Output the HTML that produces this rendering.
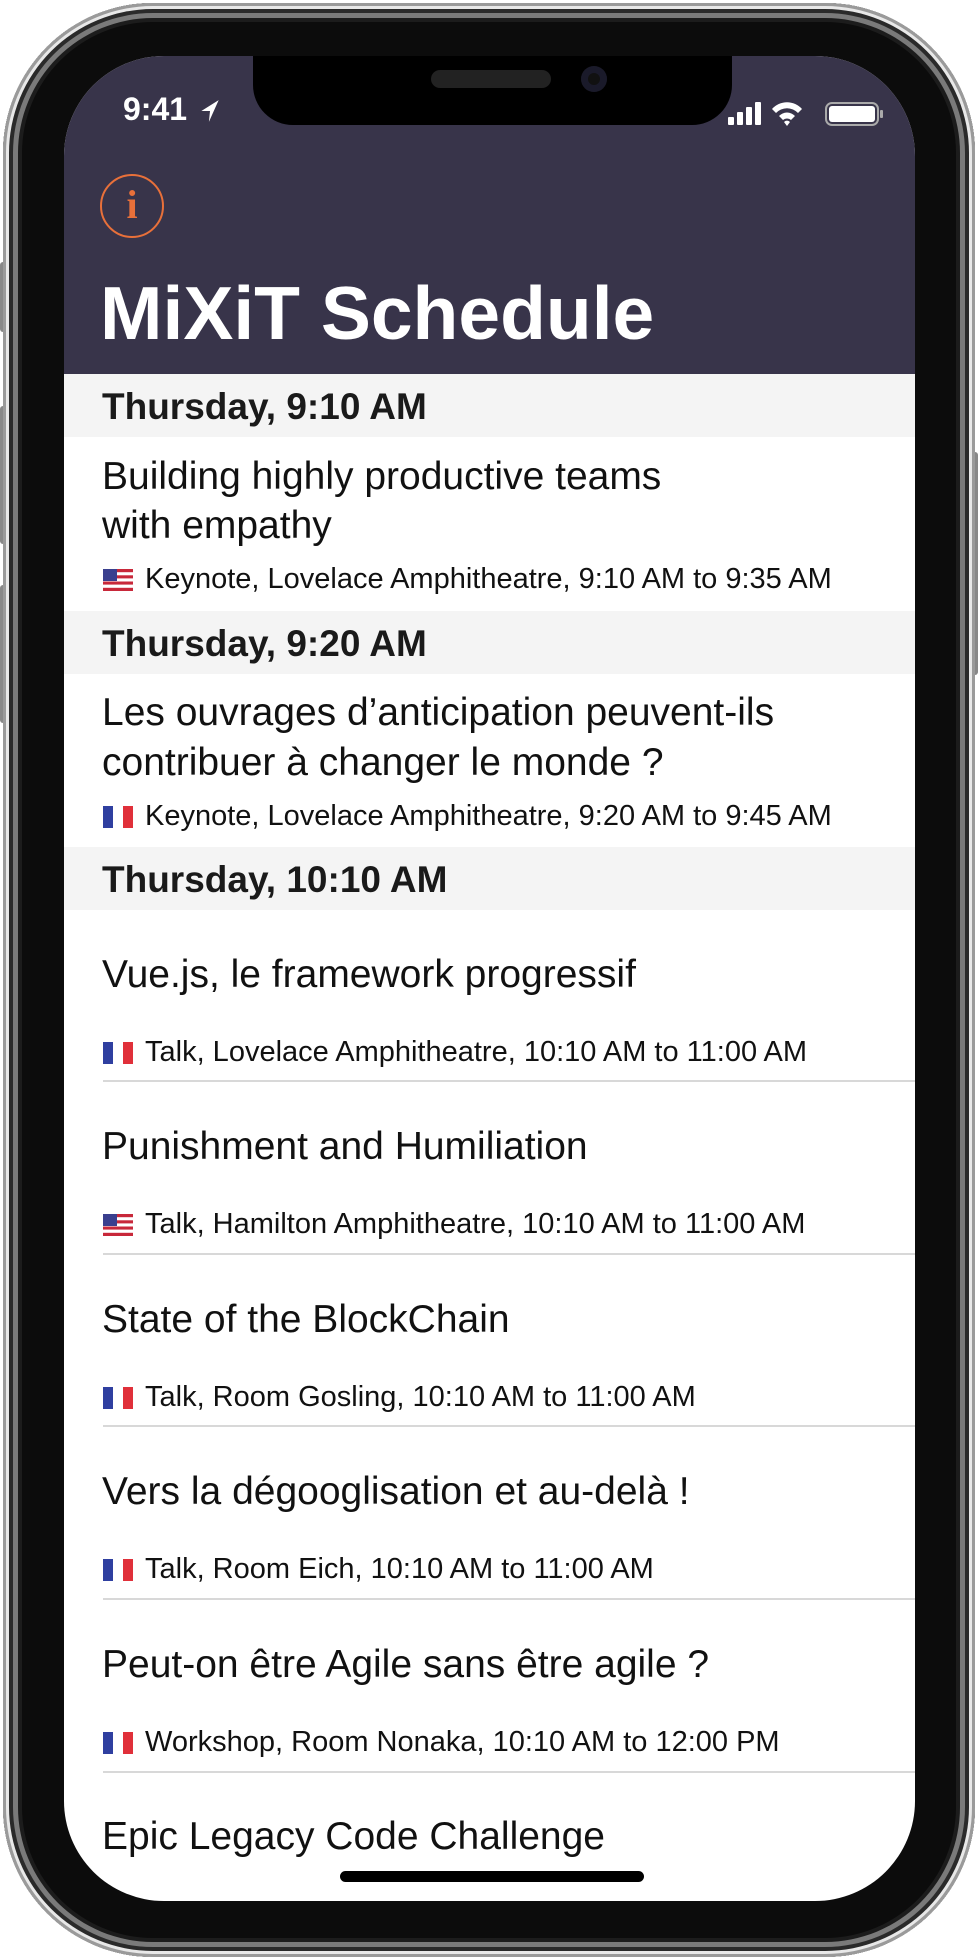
<!DOCTYPE html>
<html><head><meta charset="utf-8"><style>
*{margin:0;padding:0;box-sizing:border-box}
html,body{width:978px;height:1960px;background:#fff;overflow:hidden;font-family:"Liberation Sans",sans-serif}
.abs{position:absolute}
#phone{left:3px;top:3px;width:972px;height:1954px;border-radius:150px;background:#0c0c0c;box-shadow:inset 0 0 0 3px #9a9a9a,inset 0 0 0 6px #e8e8e8,inset 0 0 0 10px #2a2a2a,inset 0 0 0 15px #7a7a7a,inset 0 0 0 19px #1c1c1c}
#screen{left:64px;top:56px;width:851px;height:1845px;border-radius:100px;background:#fff;overflow:hidden}
.hdr{left:0;top:0;width:851px;height:318px;background:#38344a}
.sec{left:0;width:851px;height:63px;background:#f4f4f4}
.sec span{position:absolute;left:38px;top:12px;font-size:37px;font-weight:bold;color:#1a1a1a;white-space:nowrap}
.t{left:38px;font-size:39px;color:#111;white-space:nowrap}
.m{left:39px;font-size:29px;color:#111;white-space:nowrap}
.m svg{vertical-align:-3px;margin-right:12px}
.sep{left:39px;width:812px;height:2px;background:#d8d8d8}
</style></head><body>
<div class="abs" style="left:0;top:262px;width:7px;height:70px;background:#888;border-radius:3px"></div>
<div class="abs" style="left:0;top:406px;width:7px;height:138px;background:#888;border-radius:3px"></div>
<div class="abs" style="left:0;top:585px;width:7px;height:138px;background:#888;border-radius:3px"></div>
<div class="abs" style="right:0;top:452px;width:7px;height:223px;background:#888;border-radius:3px"></div>
<div id="phone" class="abs"></div>
<div id="screen" class="abs">
 <div class="abs hdr"></div>
 <div class="abs" style="left:189px;top:0;width:479px;height:69px;background:#000;border-radius:0 0 40px 40px"></div>
 <div class="abs" style="left:367px;top:14px;width:120px;height:18px;background:#222;border-radius:9px"></div>
 <div class="abs" style="left:517px;top:10px;width:26px;height:26px;background:#111;border-radius:50%;box-shadow:inset 0 0 0 7px #1a1a2a"></div>
 <div class="abs" style="left:59px;top:35px;font-size:32px;font-weight:bold;color:#fff">9:41</div>
 <svg class="abs" style="left:135px;top:42px" width="22" height="26" viewBox="0 0 20 24"><path d="M18 2 L2 12 L10 12 L9 22 Z" fill="#fff"/></svg>
 <svg class="abs" style="left:664px;top:44px" width="190" height="28" viewBox="0 0 190 28">
  <rect x="0" y="17" width="6" height="8" rx="1" fill="#fff"/><rect x="9" y="12" width="6" height="13" rx="1" fill="#fff"/><rect x="18" y="7" width="6" height="18" rx="1" fill="#fff"/><rect x="27" y="2" width="6" height="23" rx="1" fill="#fff"/>
  <path d="M44 9 A20 20 0 0 1 74 9 L70 13 A15 15 0 0 0 48 13 Z M51 16 A11 11 0 0 1 67 16 L63 20 A6 6 0 0 0 55 20 Z M56 22 A4 4 0 0 1 62 22 L59 26 Z" fill="#fff"/>
  <rect x="98" y="3" width="52" height="22" rx="6" fill="none" stroke="#aaa" stroke-width="2"/><rect x="101" y="6" width="46" height="16" rx="3" fill="#fff"/><rect x="152" y="10" width="3" height="8" rx="1" fill="#aaa"/>
 </svg>
 <div class="abs" style="left:36px;top:118px;width:64px;height:64px;border:2px solid #e8703a;border-radius:50%;color:#e8703a;font-family:'Liberation Serif',serif;font-weight:bold;font-size:40px;text-align:center;line-height:58px">i</div>
 <div class="abs" style="left:36px;top:214px;font-size:75px;font-weight:bold;color:#fff;white-space:nowrap">MiXiT Schedule</div>

 <div class="abs sec" style="top:318px"><span>Thursday, 9:10 AM</span></div>
 <div class="abs t" style="top:399px">Building highly productive teams</div>
 <div class="abs t" style="top:448px">with empathy</div>
 <div class="abs m" style="top:507px"><svg width="30" height="22"><rect width="30" height="22" fill="#fff"/><g fill="#c8283a"><rect y="0" width="30" height="3.2"/><rect y="6.3" width="30" height="3.1"/><rect y="12.5" width="30" height="3.1"/><rect y="18.8" width="30" height="3.2"/></g><rect width="14" height="12" fill="#3a3f8e"/></svg>Keynote, Lovelace Amphitheatre, 9:10 AM to 9:35 AM</div>

 <div class="abs sec" style="top:555px"><span>Thursday, 9:20 AM</span></div>
 <div class="abs t" style="top:635px">Les ouvrages d’anticipation peuvent-ils</div>
 <div class="abs t" style="top:685px">contribuer à changer le monde ?</div>
 <div class="abs m" style="top:744px"><svg width="30" height="22"><rect width="10" height="22" fill="#2f3fa0"/><rect x="10" width="10" height="22" fill="#fff"/><rect x="20" width="10" height="22" fill="#e0303a"/></svg>Keynote, Lovelace Amphitheatre, 9:20 AM to 9:45 AM</div>

 <div class="abs sec" style="top:791px"><span>Thursday, 10:10 AM</span></div>

 <div class="abs t" style="top:897px">Vue.js, le framework progressif</div>
 <div class="abs m" style="top:980px"><svg width="30" height="22"><rect width="10" height="22" fill="#2f3fa0"/><rect x="10" width="10" height="22" fill="#fff"/><rect x="20" width="10" height="22" fill="#e0303a"/></svg>Talk, Lovelace Amphitheatre, 10:10 AM to 11:00 AM</div>
 <div class="abs sep" style="top:1024px"></div>

 <div class="abs t" style="top:1069px">Punishment and Humiliation</div>
 <div class="abs m" style="top:1152px"><svg width="30" height="22"><rect width="30" height="22" fill="#fff"/><g fill="#c8283a"><rect y="0" width="30" height="3.2"/><rect y="6.3" width="30" height="3.1"/><rect y="12.5" width="30" height="3.1"/><rect y="18.8" width="30" height="3.2"/></g><rect width="14" height="12" fill="#3a3f8e"/></svg>Talk, Hamilton Amphitheatre, 10:10 AM to 11:00 AM</div>
 <div class="abs sep" style="top:1197px"></div>

 <div class="abs t" style="top:1242px">State of the BlockChain</div>
 <div class="abs m" style="top:1325px"><svg width="30" height="22"><rect width="10" height="22" fill="#2f3fa0"/><rect x="10" width="10" height="22" fill="#fff"/><rect x="20" width="10" height="22" fill="#e0303a"/></svg>Talk, Room Gosling, 10:10 AM to 11:00 AM</div>
 <div class="abs sep" style="top:1369px"></div>

 <div class="abs t" style="top:1414px">Vers la dégooglisation et au-delà !</div>
 <div class="abs m" style="top:1497px"><svg width="30" height="22"><rect width="10" height="22" fill="#2f3fa0"/><rect x="10" width="10" height="22" fill="#fff"/><rect x="20" width="10" height="22" fill="#e0303a"/></svg>Talk, Room Eich, 10:10 AM to 11:00 AM</div>
 <div class="abs sep" style="top:1542px"></div>

 <div class="abs t" style="top:1587px">Peut-on être Agile sans être agile ?</div>
 <div class="abs m" style="top:1670px"><svg width="30" height="22"><rect width="10" height="22" fill="#2f3fa0"/><rect x="10" width="10" height="22" fill="#fff"/><rect x="20" width="10" height="22" fill="#e0303a"/></svg>Workshop, Room Nonaka, 10:10 AM to 12:00 PM</div>
 <div class="abs sep" style="top:1715px"></div>

 <div class="abs t" style="top:1759px">Epic Legacy Code Challenge</div>
 <div class="abs" style="left:276px;top:1815px;width:304px;height:11px;background:#000;border-radius:6px"></div>
</div>
</body></html>
